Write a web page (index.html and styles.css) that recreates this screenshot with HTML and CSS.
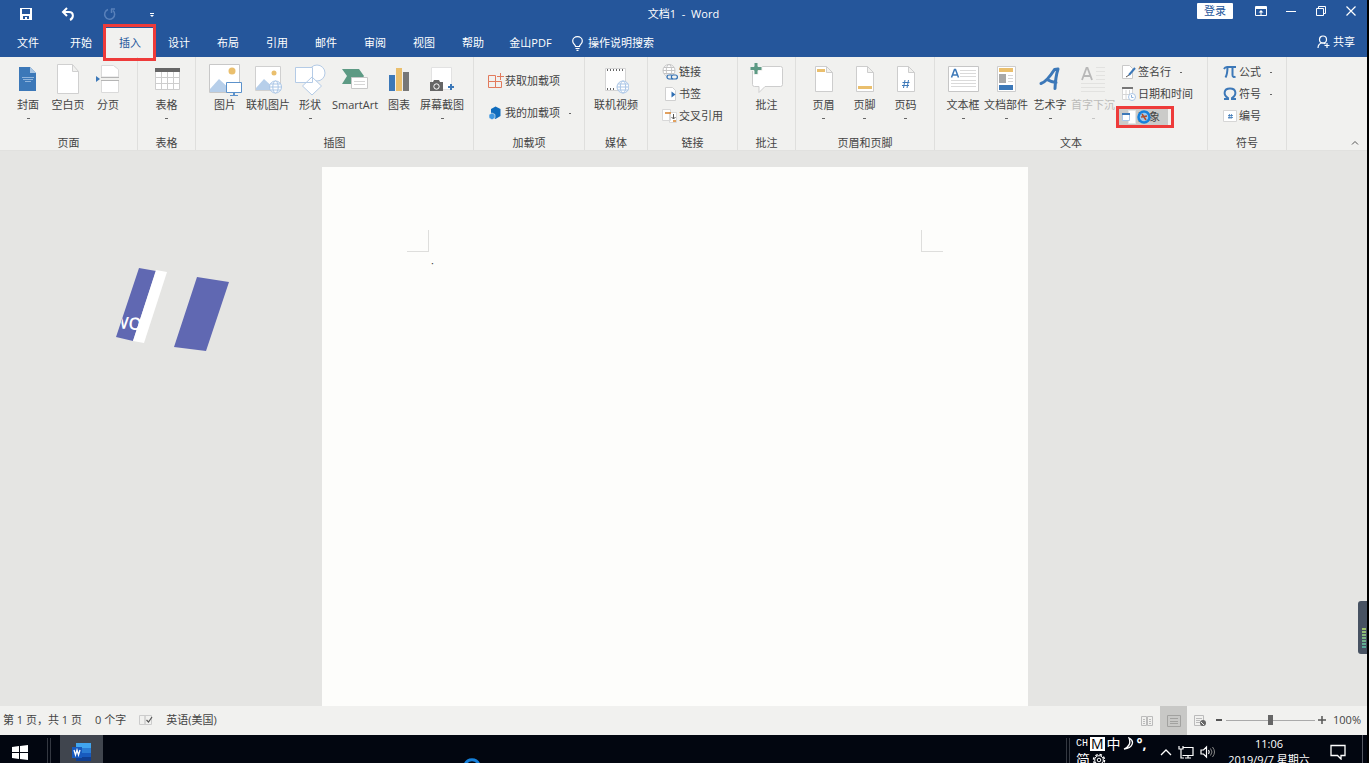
FILE: index.html
```html
<!DOCTYPE html>
<html lang="zh-CN">
<head>
<meta charset="utf-8">
<title>文档1 - Word</title>
<link rel="stylesheet" href="styles.css">
</head>
<body>
<header class="head">
  <div class="titlebar">
    <div class="quick">
      <button aria-label="保存"><svg width="14" height="14" viewBox="0 0 14 14"><path fill="#fff" fill-rule="evenodd" d="M1 1h12v12H1zM3 2v5h8V2zM4 9v3h2v-2h2v2h2V9z"/></svg></button>
      <button aria-label="撤消"><svg width="14" height="14" viewBox="0 0 14 14"><path fill="none" stroke="#fff" stroke-width="2" d="M6 1 2 5l4 4M2 5h6c5 0 5 6 1 8"/></svg></button>
      <button aria-label="重做" class="dim"><svg width="14" height="14" viewBox="0 0 14 14"><path fill="none" stroke="#6f93c8" stroke-width="1.500" d="M5 2.500a5 5 0 1 0 5 1M8 2h4M8.500 2v4"/></svg></button>
      <button aria-label="自定义快速访问工具栏"><svg width="8" height="8" viewBox="0 0 8 8"><path fill="#fff" d="M2 3h4v1H2zM2 5h4L4 7z"/></svg></button>
    </div>
    <h1 class="title">文档1 &nbsp;-&nbsp; Word</h1>
    <div class="window">
      <button class="login">登录</button>
      <button aria-label="功能区显示选项"><svg width="12" height="12" viewBox="0 0 12 12"><path fill="none" stroke="#fff" d="M.5 1.500h11v9H.5z"/><path fill="#fff" d="M1 2h10v2H1zM5.500 6h1v4h-1zM3.500 7.500 6 5l2.500 2.500z"/></svg></button>
      <button aria-label="最小化"><svg width="10" height="12" viewBox="0 0 10 12"><path stroke="#fff" d="M0 6.500h10"/></svg></button>
      <button aria-label="还原"><svg width="10" height="12" viewBox="0 0 10 12"><path fill="none" stroke="#fff" d="M.5 3.500h7v7h-7zM2.500 3V1.500h7v7H8"/></svg></button>
      <button aria-label="关闭"><svg width="10" height="12" viewBox="0 0 10 12"><path stroke="#fff" stroke-width="1.200" d="m.5 1.500 9 9m0-9-9 9"/></svg></button>
    </div>
  </div>
  <nav class="tabs">
    <button class="tab file">文件</button>
    <button class="tab">开始</button>
    <button class="tab active">插入<span class="mark"></span></button>
    <button class="tab">设计</button>
    <button class="tab">布局</button>
    <button class="tab">引用</button>
    <button class="tab">邮件</button>
    <button class="tab">审阅</button>
    <button class="tab">视图</button>
    <button class="tab">帮助</button>
    <button class="tab wide">金山PDF</button>
    <button class="tell"><svg width="11" height="15" viewBox="0 0 11 15"><path fill="none" stroke="#fff" stroke-width="1.200" d="M3.500 10.500c0-2-2.800-2.500-2.800-5.500a4.800 4.300 0 0 1 9.600 0c0 3-2.800 3.500-2.800 5.500zM3.500 12.500h4M4.500 14.300h2"/></svg>操作说明搜索</button>
    <button class="share"><svg width="13" height="14" viewBox="0 0 13 14"><g fill="none" stroke="#fff" stroke-width="1.200"><circle cx="6" cy="4.500" r="3.500"/><path d="M1 13c0-3 2-5 4-5s3 .5 3.500 1M10 8v5M7.500 10.500h5"/></g></svg>共享</button>
  </nav>
</header>

<section class="ribbon" aria-label="插入">
  <div class="group g-pages">
    <div class="tools">
      <button class="tool"><svg width="20" height="36" viewBox="0 0 20 36"><path fill="#3c78b8" d="M1 5h11l6 6v18H1z"/><path fill="#a9c6e4" d="M12 5v6h6z"/><path fill="#8fb4dc" d="M4 15h12v1H4zM5 17h10v1H5zM7 19h6v1H7z"/></svg>封面<i class="drop"></i></button>
      <button class="tool"><svg width="24" height="36" viewBox="0 0 24 36"><path fill="#fff" stroke="#d0d0d0" d="M1.500 2.500h15l6 7v22h-21zM16.500 2.500v7h6"/></svg>空白页</button>
      <button class="tool"><svg width="26" height="36" viewBox="0 0 26 36"><path fill="#fff" stroke="#dadada" d="M6.500 3.500h12l5 4v7.500h-17zM6.500 30.500v-12h17v12z"/><path stroke="#b5b5b5" d="M6 15.500h18M6 18.500h18"/><path fill="#3c78b8" d="M1 14v6l4-3z"/></svg>分页</button>
    </div>
    <div class="caption">页面</div>
  </div>
  <div class="group g-table">
    <div class="tools">
      <button class="tool"><svg width="26" height="36" viewBox="0 0 26 36"><path fill="#fff" stroke="#cdcdcd" d="M1.500 6.500h24v21h-24zM7.500 10v17M13.500 10v17M19.500 10v17M1 15.500h24M1 21.500h24"/><path fill="#666" d="M1 6h25v4H1z"/></svg>表格<i class="drop"></i></button>
    </div>
    <div class="caption">表格</div>
  </div>
  <div class="group g-art">
    <div class="tools">
      <button class="tool w36"><svg width="34" height="36" viewBox="0 0 34 36"><path fill="#fff" stroke="#c8c8c8" d="M1.500 2.500h30v28h-30z"/><path fill="#b7cfea" d="m2 27 9-10 14 13H2z"/><circle cx="24" cy="9" r="3.500" fill="#eabf6d"/><path fill="#fff" stroke="#5c92cb" d="M18.500 20.500h15v10h-15z"/><path fill="#5c92cb" d="M25 31h2v2h3v1h-8v-1h3z"/></svg>图片</button>
      <button class="tool w50"><svg width="28" height="36" viewBox="0 0 28 36"><path fill="#fff" stroke="#d0d0d0" d="M1.500 4.500h25v24h-25z"/><path fill="#b7cfea" d="m2 26 8-9 12 11H2z"/><circle cx="20" cy="11" r="2.500" fill="#eabf6d"/><g fill="#fff" stroke="#a9c5e6"><circle cx="21.500" cy="25" r="6"/><ellipse cx="21.500" cy="25" rx="2.700" ry="6"/><path d="M15.500 25h12M16.500 22h10M16.500 28h10"/></g></svg>联机图片</button>
      <button class="tool w34"><svg width="32" height="36" viewBox="0 0 32 36"><g fill="#fff" stroke="#b4cbe6"><circle cx="23" cy="11" r="8"/><path d="M1.500 5.500h17v15h-17zM18 15l9.500 9L18 33l-9.500-9z"/></g></svg>形状<i class="drop"></i></button>
      <button class="tool w56"><svg width="26" height="36" viewBox="0 0 26 36"><path fill="#5d9a84" d="M0 7h17l5 7-5 8H0l5-8z"/><path fill="#fff" stroke="#c8c8c8" d="M9.500 15.500h16v11h-16z"/><path stroke="#d6d6d6" d="M12 19.500h11M12 22.500h11"/></svg>SmartArt</button>
      <button class="tool w32"><svg width="22" height="36" viewBox="0 0 22 36"><path fill="#3c78b8" d="M1 13h6v16H1z"/><path fill="#eabf6d" d="M8 6h6v23H8z"/><path fill="#777" d="M15 10h6v19h-6z"/></svg>图表</button>
      <button class="tool w54"><svg width="26" height="36" viewBox="0 0 26 36"><path fill="#fff" stroke="#e2e2e2" d="M2.500 5.500h20v22h-20z"/><path fill="#666" d="M1 20h3l1-2h5l1 2h3v9H1z"/><circle cx="7.500" cy="24.500" r="2.700" fill="none" stroke="#fff"/><path fill="#3c78b8" d="M21 22h2v2h2v2h-2v2h-2v-2h-2v-2h2z"/></svg>屏幕截图<i class="drop"></i></button>
    </div>
    <div class="caption">插图</div>
  </div>
  <div class="group g-addins">
    <div class="rows tall">
      <button class="row"><svg width="16" height="18" viewBox="0 0 16 18"><path fill="none" stroke="#e27a5c" d="M.5 3.500h7v6h-7zM.5 9.500h7v6h-7zM7.500 9.500h6v6h-6zM12.500 1v7M9 4.500h7"/></svg>获取加载项</button>
      <button class="row"><svg width="16" height="16" viewBox="0 0 16 16"><path fill="#0f6cbd" d="m7.500 1.500 5 2.500v7l-5 3-4.500-3V4z"/><path fill="#3d96e0" stroke="#f1f1ef" stroke-width=".6" d="m1 9.500 3-1.500 3 1.500V13l-3 1.800L1 13z"/></svg>我的加载项<i class="drop side"></i></button>
    </div>
    <div class="caption">加载项</div>
  </div>
  <div class="group g-media">
    <div class="tools">
      <button class="tool"><svg width="26" height="36" viewBox="0 0 26 36"><path fill="#fff" stroke="#d4d4d4" d="M2.500 6.500h20v22h-20z"/><path stroke="#666" stroke-width="2" stroke-dasharray="1 2" d="M4 8h18M4 27h9"/><g fill="#fff" stroke="#a9c5e6"><circle cx="20" cy="25" r="6"/><ellipse cx="20" cy="25" rx="2.700" ry="6"/><path d="M14 25h12M15 22h10M15 28h10"/></g></svg>联机视频</button>
    </div>
    <div class="caption">媒体</div>
  </div>
  <div class="group g-links">
    <div class="rows">
      <button class="row"><svg width="17" height="18" viewBox="0 0 17 18"><g fill="#fff" stroke="#c4c4c4"><circle cx="8" cy="7.500" r="6"/><ellipse cx="8" cy="7.500" rx="2.700" ry="6"/><path d="M2 7.500h12M3 4.500h10M3 10.500h10"/></g><g fill="#f1f1ef" stroke="#2f6fb3" stroke-width="1.200"><rect x="6" y="12" width="6" height="4" rx="2"/><rect x="10.400" y="12" width="6" height="4" rx="2"/></g></svg>链接</button>
      <button class="row"><svg width="17" height="16" viewBox="0 0 17 16"><path fill="#fff" stroke="#d0d0d0" d="M4.500 1.500h7l3 3v10h-10z"/><path fill="#2f6fb3" d="M10.500 5.500v6l4-3z"/></svg>书签</button>
      <button class="row"><svg width="17" height="16" viewBox="0 0 17 16"><path fill="#fff" stroke="#d8d8d8" d="M1.500 1.500h8v11h-8zM8.500 4.500h7v10h-7z"/><path fill="none" stroke="#d9822b" stroke-width="1.300" d="M4 5h6M12 13h3"/><path fill="none" stroke="#555" d="M12.500 6v5m-2-2 2 2 2-2"/></svg>交叉引用</button>
    </div>
    <div class="caption">链接</div>
  </div>
  <div class="group g-comment">
    <div class="tools">
      <button class="tool"><svg width="34" height="36" viewBox="0 0 34 36"><path fill="#fff" stroke="#cdcdcd" d="M4.500 4.500h26q2 0 2 2v16q0 2-2 2H15l-6 6v-6H4.500q-2 0-2-2v-16q0-2 2-2z"/><path fill="#5d9a84" stroke="#f1f1ef" d="M4 .5h4v4h4v4H8v4H4v-4H0v-4h4z"/></svg>批注</button>
    </div>
    <div class="caption">批注</div>
  </div>
  <div class="group g-header">
    <div class="tools">
      <button class="tool w41"><svg width="20" height="36" viewBox="0 0 20 36"><path fill="#fff" stroke="#cdcdcd" d="M1.500 4.500h11l6 6v19h-17zM12.500 4.500v6h6"/><path fill="#eabf6d" d="M3 7h8v3H3z"/></svg>页眉<i class="drop"></i></button>
      <button class="tool w41"><svg width="20" height="36" viewBox="0 0 20 36"><path fill="#fff" stroke="#cdcdcd" d="M1.500 4.500h11l6 6v19h-17zM12.500 4.500v6h6"/><path fill="#eabf6d" d="M3 24h14v3H3z"/></svg>页脚<i class="drop"></i></button>
      <button class="tool w41"><svg width="20" height="36" viewBox="0 0 20 36"><path fill="#fff" stroke="#cdcdcd" d="M1.500 4.500h11l6 6v19h-17zM12.500 4.500v6h6"/><path stroke="#3c78b8" d="m9 18-1.500 8M12.500 18 11 26M6.500 20.500h7M6 23.500h7"/></svg>页码<i class="drop"></i></button>
    </div>
    <div class="caption">页眉和页脚</div>
  </div>
  <div class="group g-text">
    <div class="tools">
      <button class="tool w40"><svg width="32" height="36" viewBox="0 0 32 36"><path fill="#fff" stroke="#c6c6c6" d="M1.500 4.500h30v25h-30z"/><path stroke="#dadada" d="M13 8.500h16M13 11.500h16M13 14.500h16M4 18.500h25M4 21.500h25M4 24.500h25"/><path fill="none" stroke="#3c78b8" stroke-width="1.500" d="m4.500 15.500 3-8h1l3 8M6 13h4.500"/></svg>文本框<i class="drop"></i></button>
      <button class="tool w46"><svg width="20" height="36" viewBox="0 0 20 36"><path fill="#fff" stroke="#cdcdcd" d="M1.500 4.500h18v25h-18z"/><path fill="#eabf6d" d="M3 6h14v4H3z"/><path fill="#a8a8a8" d="M3 12h7v9H3z"/><path stroke="#d6d6d6" d="M12 13.500h5M12 16.500h5M12 19.500h5"/><path fill="#3c78b8" d="M3 23h14v5H3z"/></svg>文档部件<i class="drop"></i></button>
      <button class="tool w42"><svg width="22" height="36" viewBox="0 0 22 36"><path fill="none" stroke="#3c78b8" stroke-width="3" stroke-linejoin="round" stroke-linecap="round" d="M2 21.500C7 20 12 13 15.500 7.500L19 7q-2.500 8-3 19.500M8 17.500q4 2.500 9 3"/></svg>艺术字<i class="drop"></i></button>
      <button class="tool w44" disabled><svg width="26" height="36" viewBox="0 0 26 36"><path stroke="#e2e2e0" d="M16 5.500h9M16 9.500h9M16 13.500h9M16 17.500h9M1 21.500h24M1 25.500h24M1 29.500h24"/><path fill="none" stroke="#b8b8b8" stroke-width="1.800" d="m2 18 4.500-12h1L12 18M4 14h6"/></svg>首字下沉<i class="drop"></i></button>
      <div class="rows">
        <button class="row"><svg width="16" height="16" viewBox="0 0 16 16"><path fill="#fff" stroke="#c9c9c9" d="M1.500 1.500h7l3 3v10h-10z"/><path stroke="#3c78b8" stroke-width="2" d="m14 4-6 7"/><path stroke="#555" d="m5 13 3-2"/></svg>签名行<i class="drop side"></i></button>
        <button class="row"><svg width="16" height="16" viewBox="0 0 16 16"><path fill="#fff" stroke="#d6d6d6" d="M1.500 2.500h10v11h-10zM5 4v9M8.500 4v9M2 8.500h9"/><path fill="#777" d="M1 1h11v2H1z"/><circle cx="11" cy="11" r="3.500" fill="#fff" stroke="#a9c5e6"/><path fill="none" stroke="#8db2dc" d="M10.500 9v2.500h2"/></svg>日期和时间</button>
        <button class="row object"><svg width="16" height="16" viewBox="0 0 16 16"><path fill="#fff" stroke="#e6e6e6" d="M7.500 1.500h7v13h-7z"/><path fill="#fff" stroke="#a9c5e6" d="M1.500 4.500h7v7h-7z"/><path fill="#3c78b8" d="M1 4h8v2H1z"/></svg>对象<i class="drop side"></i>
          <svg class="busy" width="14" height="14" viewBox="0 0 14 14"><circle cx="7" cy="7" r="5.500" fill="#9cc8ee" stroke="#1681dc" stroke-width="2.500"/><path stroke="#b44b25" stroke-width="1.500" d="m5 4 4 6M4 7l6-1"/></svg>
          <span class="mark"></span></button>
      </div>
    </div>
    <div class="caption">文本</div>
  </div>
  <div class="group g-symbols">
    <div class="rows">
      <button class="row"><svg width="16" height="16" viewBox="0 0 16 16"><path fill="none" stroke="#3c78b8" stroke-width="2" d="M2 5c1-2 2-2 3-2h9M5.500 3c0 5-.5 8-2 10.500M10.500 3v8c0 2 1.500 2.500 3 1.500"/></svg>公式<i class="drop side"></i></button>
      <button class="row"><svg width="16" height="16" viewBox="0 0 16 16"><path fill="none" stroke="#3c78b8" stroke-width="2" d="M2 13h4v-1C1 9 1.500 2.500 8 2.500S15 9 10 12v1h4"/></svg>符号<i class="drop side"></i></button>
      <button class="row"><svg width="16" height="16" viewBox="0 0 16 16"><path fill="#fff" stroke="#d6d6d6" d="M1.500 2.500h13v11h-13z"/><path stroke="#3c78b8" stroke-width=".8" d="M7.500 6 7 11M9.500 6 9 11M6 7.500h5M6 9.500h5"/></svg>编号</button>
    </div>
    <div class="caption">符号</div>
  </div>
  <button class="collapse" aria-label="折叠功能区"><svg width="8" height="6" viewBox="0 0 8 6"><path fill="none" stroke="#555" d="m1 4.500 3-3 3 3"/></svg></button>
</section>

<main class="workspace">
  <article class="page">
    <div class="corners"><span class="corner left"></span><span class="corner right"></span></div>
    <p class="para">·</p>
  </article>
  <svg class="watermark" width="116" height="86" viewBox="0 0 116 86">
    <defs><clipPath id="bar"><path d="M24 2 52 6 29 77 1 71z"/></clipPath></defs>
    <path fill="#6068b2" d="M24 1 41 4 18 74 1 70zM82 10l32 5-23 69-32-4z"/>
    <path fill="#fff" d="m41 3 11 2-23 71-11-2z"/>
    <g clip-path="url(#bar)"><text class="wm-text" x="-3" y="62" transform="rotate(5 10 60)">WO</text></g>
  </svg>
  <div class="meter"><span></span></div>
</main>

<footer class="status">
  <span>第 1 页，共 1 页</span>
  <span>0 个字</span>
  <svg width="14" height="12" viewBox="0 0 14 12"><path fill="none" stroke="#ccc" d="M.5 1.500h5.500v9H.5zM6 1.500h6.500v9H6z"/><path fill="none" stroke="#555" stroke-width="1.200" d="m7.500 6 2 2 3.500-5"/></svg>
  <span>英语(美国)</span>
  <div class="views">
    <button aria-label="阅读视图"><svg width="12" height="12" viewBox="0 0 12 12"><path fill="none" stroke="#bbb" d="M.5 1.500h5v9h-5zM6.500 1.500h5v9h-5zM2 4.500h2M2 6.500h2M2 8.500h2M8 4.500h2M8 6.500h2M8 8.500h2"/></svg></button>
    <button class="on" aria-label="页面视图"><svg width="14" height="12" viewBox="0 0 14 12"><path fill="none" stroke="#a2a2a0" d="M.5.5h13v11H.5zM3 3.500h8M3 6.500h8M3 8.500h8"/></svg></button>
    <button aria-label="Web 版式视图"><svg width="14" height="12" viewBox="0 0 14 12"><path fill="none" stroke="#bbb" d="M.5.5h9v10h-9zM2 3.500h6M2 5.500h4M2 7.500h4"/><circle cx="9" cy="8" r="3" fill="#666"/><path stroke="#f1f1ef" d="m7 7 3 3"/></svg></button>
  </div>
  <div class="zoom">
    <button aria-label="缩小"><svg width="7" height="8" viewBox="0 0 7 8"><path stroke="#555" stroke-width="2" d="M0 4h6"/></svg></button>
    <input type="range" aria-label="缩放" min="0" max="100" value="50">
    <button aria-label="放大"><svg width="8" height="8" viewBox="0 0 8 8"><path stroke="#555" stroke-width="1.500" d="M0 4h8M4 0v8"/></svg></button>
    <span class="percent">100%</span>
  </div>
</footer>

<div class="taskbar">
  <button class="start" aria-label="开始菜单"><svg width="16" height="16" viewBox="0 0 16 16"><path fill="#fff" d="m0 3 7-1v6H0zM8 2l8-1v7H8zM0 9h7v6l-7-1zM8 9h8v7l-8-1z"/></svg></button>
  <span class="divider"></span>
  <button class="app" aria-label="Word"><svg width="20" height="20" viewBox="0 0 20 20"><path fill="#41a5ee" d="M4 1h15v5H4z"/><path fill="#2b7cd3" d="M4 6h15v5H4z"/><path fill="#185abd" d="M4 11h15v4H4z"/><path fill="#103f91" d="M4 15h15v4H4z"/><path fill="#185abd" d="M0 5h10v11H0z"/><path fill="none" stroke="#fff" stroke-width="1.300" d="m2 8 1.500 5L5 8l1.500 5L8 8"/></svg></button>
  <svg class="cursor" width="18" height="8" viewBox="0 0 18 8"><path fill="none" stroke="#1681dc" stroke-width="3" d="M2 8c2-7 12-7 14 0"/></svg>
  <div class="tray">
    <span class="divider"></span>
    <div class="ime">
      <div class="ime-line"><span class="ch">CH</span><span class="m">M</span><span>中</span><svg width="12" height="14" viewBox="0 0 12 14"><path fill="none" stroke="#fff" stroke-width="1.300" d="M6 1c6 3 4 10-5 11 5-2 7-6 5-11z"/></svg><b>°,</b></div>
      <div class="ime-line"><span>简</span><svg width="14" height="14" viewBox="0 0 14 14"><circle cx="7" cy="7" r="5.500" fill="none" stroke="#fff" stroke-width="1.500" stroke-dasharray="2.500 1.800"/><circle cx="7" cy="7" r="4.300" fill="none" stroke="#fff"/><circle cx="7" cy="7" r="1.800" fill="none" stroke="#fff"/></svg></div>
    </div>
    <svg width="12" height="8" viewBox="0 0 12 8"><path fill="none" stroke="#fff" stroke-width="1.300" d="m1 7 5-5 5 5"/></svg>
    <svg width="16" height="14" viewBox="0 0 16 14"><path fill="none" stroke="#fff" stroke-width="1.200" d="M5 2.500h10v8H4.500M7 13h6M10 10.500V13M1 1v3h4V1M3 4v9h3"/></svg>
    <svg width="16" height="14" viewBox="0 0 16 14"><path fill="none" stroke="#fff" stroke-width="1.200" d="M1 5h2.500l3-3v10l-3-3H1zM8.500 5q1.500 2 0 4"/><path fill="none" stroke="#888" d="M10.500 3.500q3 3.500 0 7M12.500 2q4 5 0 10"/></svg>
    <div class="clock"><time>11:06</time><span>2019/9/7 星期六</span></div>
    <button class="notice" aria-label="通知"><svg width="16" height="16" viewBox="0 0 16 16"><path fill="none" stroke="#fff" stroke-width="1.300" d="M1 1.500h14v10h-4V15l-3.500-3.500H1z"/></svg></button>
    <span class="edge"></span>
  </div>
</div>
</body>
</html>
```

FILE: styles.css
```css
* { box-sizing: border-box; }

body {
  margin: 0;
  height: 100vh;
  display: flex;
  flex-direction: column;
  overflow: hidden;
  border-right: 2px solid #000;
  background: #e5e5e3;
  color: #444;
  font: 11px/14px "Open Sans", "Noto Sans CJK SC", sans-serif;
}

button {
  margin: 0;
  padding: 0;
  border: 0;
  background: none;
  color: inherit;
  font: inherit;
  white-space: nowrap;
}

svg { flex: none; display: block; }

.head { background: #25569b; color: #fff; }

.titlebar {
  height: 28px;
  display: grid;
  grid-template-columns: 1fr auto 1fr;
}

.quick { display: flex; align-items: center; padding-left: 5px; }
.quick button { width: 42px; display: grid; place-items: center; }
.quick .dim { opacity: .7; }

.title { margin: 0; font: inherit; line-height: 28px; }

.window {
  display: flex;
  justify-content: flex-end;
  align-items: center;
  padding: 0 1px 6px 0;
}
.window button { width: 30px; display: grid; place-items: center; }
.window .login {
  width: 36px;
  height: 16px;
  margin-right: 13px;
  background: #fff;
  color: #25569b;
  border-radius: 1px;
}

.tabs { height: 29px; display: flex; align-items: stretch; }
.tab { width: 49px; padding: 1px 0 0 1px; position: relative; }
.tab.file { width: 56px; padding-left: 0; }
.tab.wide { width: 66px; }
.tab.active { background: #f1f1ef; color: #25569b; z-index: 1; }

.mark {
  position: absolute;
  inset: -4px -2px;
  border: 3px solid #ee3b3a;
  pointer-events: none;
}

.tell, .share { display: flex; align-items: center; gap: 5px; }
.tell { padding: 1px 0 0 9px; }
.share { margin-left: auto; padding: 0 12px 2px 0; gap: 3px; }

.ribbon {
  display: flex;
  background: #f1f1ef;
  border-bottom: 1px solid #e1e1df;
}

.group {
  display: flex;
  flex-direction: column;
  flex: none;
  border-right: 1px solid #dfdfdd;
}
.g-pages { width: 138px; }
.g-table { width: 58px; }
.g-art { width: 278px; }
.g-addins { width: 111px; }
.g-media { width: 63px; }
.g-links { width: 90px; }
.g-comment { width: 58px; }
.g-header { width: 139px; }
.g-text { width: 273px; }
.g-symbols { width: 79px; }

.tools { height: 78px; display: flex; justify-content: center; }
.g-pages .tools, .g-text .tools { justify-content: flex-start; padding-left: 8px; }
.g-header .tools { justify-content: flex-start; padding-left: 7px; }
.g-art .tools { justify-content: flex-start; padding-left: 11px; }

.tool {
  width: 40px;
  flex: none;
  display: flex;
  flex-direction: column;
  align-items: center;
  padding-top: 5px;
}
.tool:disabled { color: #bcbcba; }
.w32 { width: 32px; }
.w34 { width: 34px; }
.w36 { width: 36px; }
.w41 { width: 41px; }
.w42 { width: 42px; }
.w44 { width: 44px; }
.w46 { width: 46px; }
.w50 { width: 50px; }
.w54 { width: 54px; }
.w56 { width: 56px; }

.drop { width: 3px; height: 1px; margin-top: 6px; background: currentColor; opacity: .8; }
.drop.side { width: 2px; margin: 0 0 0 8px; }

.rows { height: 78px; display: flex; flex-direction: column; padding-top: 4px; }
.rows.tall { padding-top: 8px; }
.row { height: 22px; display: flex; align-items: center; gap: 1px; position: relative; }
.tall .row { height: 32px; }
.g-addins .rows, .g-symbols .rows { padding-left: 14px; }
.g-links .rows { padding-left: 13px; }
.g-text .rows { padding-left: 6px; }

.object {
  height: 16px;
  margin: 4px 0 0 -3px;
  padding-left: 3px;
  width: 50px;
  background: #cbcbc9;
}
.object .mark { inset: -3px -6px -3px -2px; }
.busy { position: absolute; left: 19px; top: 1px; }

.caption { height: 15px; line-height: 16px; text-align: center; }
.collapse { margin: auto 8px 4px auto; }

.workspace {
  flex: 1;
  min-height: 0;
  display: flex;
  justify-content: center;
  padding: 16px 17px 0 0;
  position: relative;
}
.page { width: 706px; background: #fdfdfb; padding: 63px 85px 0; }
.corners { display: flex; justify-content: space-between; }
.corner { width: 22px; height: 22px; border-bottom: 1px solid #deded; border-color: #dededc; }
.corner { border: 0 solid #dededc; border-bottom-width: 1px; }
.corner.left { border-right-width: 1px; }
.corner.right { border-left-width: 1px; }
.para { margin: 4px 0 0 24px; }

.watermark { position: absolute; left: 115px; top: 116px; }
.wm-text { fill: #fff; font: 600 17px "Open Sans", sans-serif; }

.meter {
  position: absolute;
  right: 0;
  bottom: 52px;
  width: 9px;
  height: 53px;
  padding: 27px 1px 5px 4px;
  background: #475262;
  border-radius: 3px 0 0 3px;
}
.meter span {
  display: block;
  height: 100%;
  background: repeating-linear-gradient(transparent 0 2px, #475262 2px 3px), linear-gradient(#a4c46a, #4da79d);
}

.status {
  height: 29px;
  flex: none;
  display: flex;
  align-items: center;
  padding: 0 6px 1px 3px;
  gap: 13px;
  background: #f1f1ef;
}
.views { display: flex; align-self: stretch; margin: 0 0 -1px auto; }
.views button { width: 27px; display: grid; place-items: center; }
.views .on { background: #c8c8c6; }
.zoom { display: flex; align-items: center; gap: 3px; margin-left: -11px; }
.zoom .percent { margin-left: 4px; }
.zoom input {
  appearance: none;
  width: 89px;
  height: 12px;
  margin: 0;
  background: linear-gradient(#aaa, #aaa) center / 100% 1px no-repeat;
}
.zoom input::-webkit-slider-thumb {
  appearance: none;
  width: 5px;
  height: 10px;
  background: #666;
}

.taskbar {
  height: 28px;
  flex: none;
  display: flex;
  overflow: hidden;
  background: #020610;
  color: #fff;
  position: relative;
}
.start { width: 40px; display: grid; place-items: center; padding: 6px 0 0; }
.divider {
  width: 4px;
  margin: 3px 9px 0 7px;
  border: solid #343841;
  border-width: 0 1px;
}
.app { width: 43px; display: grid; place-items: center; padding-top: 5px; background: #40454e; }
.cursor { position: absolute; left: 463px; bottom: -2px; }

.tray { display: flex; align-items: center; gap: 6px; margin-left: auto; padding-right: 4px; }
.tray .divider { align-self: stretch; margin: 3px 0 0; }
.tray > svg { margin-top: 6px; }
.ime { width: 78px; align-self: flex-start; padding-top: 1px; font-size: 14px; line-height: 16px; }
.ime-line { display: flex; align-items: center; gap: 2px; height: 16px; white-space: nowrap; }
.ch { font: 10px/16px "Liberation Mono", monospace; }
.m { background: #fff; color: #000; padding: 0 1px; line-height: 14px; }
.clock {
  width: 94px;
  align-self: flex-start;
  padding-top: 1px;
  line-height: 16px;
  display: flex;
  flex-direction: column;
  align-items: center;
  white-space: nowrap;
}
.notice { margin: 6px 10px 0 8px; }
.edge { width: 1px; align-self: stretch; background: #555963; }
```
